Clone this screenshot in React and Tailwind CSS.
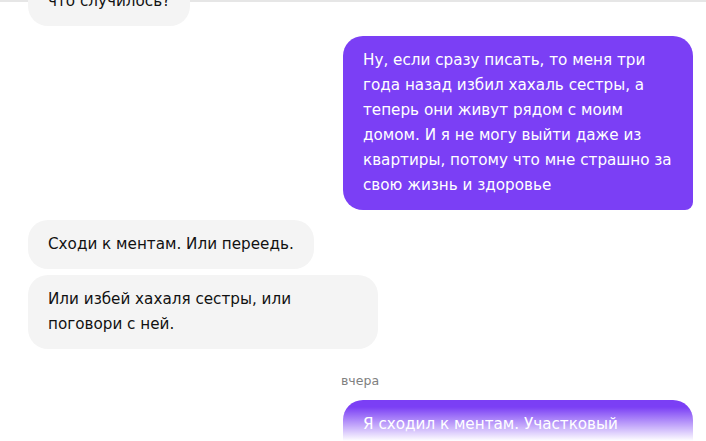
import React from "react";

const messages = [
  { id: 1, mine: false, text: "что случилось?" },
  {
    id: 2,
    mine: true,
    text: "Ну, если сразу писать, то меня три года назад избил хахаль сестры, а теперь они живут рядом с моим домом. И я не могу выйти даже из квартиры, потому что мне страшно за свою жизнь и здоровье",
  },
  { id: 3, mine: false, text: "Сходи к ментам. Или переедь." },
  { id: 4, mine: false, text: "Или избей хахаля сестры, или поговори с ней." },
];

function Bubble({ mine, text, className = "" }) {
  return (
    <div className={`flex ${mine ? "justify-end" : "justify-start"} ${className}`}>
      <div
        className={
          mine
            ? "max-w-[350px] bg-[#7b3ff5] text-white rounded-[20px] rounded-br-[8px] px-5 py-3"
            : "max-w-[350px] bg-[#f4f4f4] text-[#111] rounded-[20px] px-5 py-3"
        }
      >
        {text}
      </div>
    </div>
  );
}

export default function App() {
  return (
    <div
      className="relative h-[441px] w-[706px] bg-white overflow-hidden text-[15.2px] leading-[25px]"
      style={{ fontFamily: "Tahoma, 'DejaVu Sans', sans-serif" }}
    >
      <div className="h-[441px] border-t-2 border-[#e6e6e6] flex flex-col pl-[28px] pr-[13px]">
        {/* верхнее сообщение уходит за край */}
        <Bubble {...messages[0]} className="relative z-10 -mt-[25px]" />
        <Bubble {...messages[1]} className="mt-[10px]" />
        <Bubble {...messages[2]} className="mt-[10px]" />
        <Bubble {...messages[3]} className="mt-[6px]" />

        <div className="mt-[22px] pl-[313px] text-[12.5px] leading-[20px] text-[#808080]">
          вчера
        </div>

        <Bubble mine text="Я сходил к ментам. Участковый пришёл, поговорил с ним" className="mt-[9px]" />
      </div>

      {/* затухание внизу */}
      <div className="absolute bottom-0 left-0 right-0 h-[34px] bg-gradient-to-b from-white/0 to-white" />
    </div>
  );
}
